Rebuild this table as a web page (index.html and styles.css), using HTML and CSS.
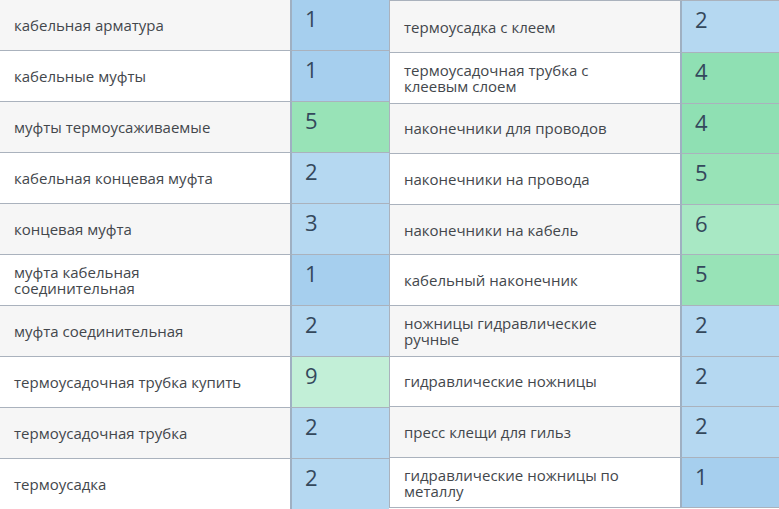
FILE: index.html
```html
<!DOCTYPE html>
<html lang="ru">
<head>
<meta charset="utf-8">
<link rel="stylesheet" href="styles.css">
</head>
<body>
<div class="wrap">
  <div class="tbl tbl-left">
    <div class="row"><div class="lbl">кабельная арматура</div><div class="num c1">1</div></div>
    <div class="row"><div class="lbl">кабельные муфты</div><div class="num c1">1</div></div>
    <div class="row"><div class="lbl">муфты термоусаживаемые</div><div class="num c5">5</div></div>
    <div class="row"><div class="lbl">кабельная концевая муфта</div><div class="num c2">2</div></div>
    <div class="row"><div class="lbl">концевая муфта</div><div class="num c2">3</div></div>
    <div class="row"><div class="lbl">муфта кабельная соединительная</div><div class="num c1">1</div></div>
    <div class="row"><div class="lbl">муфта соединительная</div><div class="num c2">2</div></div>
    <div class="row"><div class="lbl">термоусадочная трубка купить</div><div class="num c9">9</div></div>
    <div class="row"><div class="lbl">термоусадочная трубка</div><div class="num c2">2</div></div>
    <div class="row"><div class="lbl">термоусадка</div><div class="num c2">2</div></div>
  </div>
  <div class="tbl tbl-right">
    <div class="row"><div class="lbl">термоусадка с клеем</div><div class="num c2">2</div></div>
    <div class="row"><div class="lbl">термоусадочная трубка с клеевым слоем</div><div class="num c4">4</div></div>
    <div class="row"><div class="lbl">наконечники для проводов</div><div class="num c4">4</div></div>
    <div class="row"><div class="lbl">наконечники на провода</div><div class="num c5">5</div></div>
    <div class="row"><div class="lbl">наконечники на кабель</div><div class="num c6">6</div></div>
    <div class="row"><div class="lbl">кабельный наконечник</div><div class="num c5">5</div></div>
    <div class="row"><div class="lbl">ножницы гидравлические ручные</div><div class="num c2">2</div></div>
    <div class="row"><div class="lbl">гидравлические ножницы</div><div class="num c2">2</div></div>
    <div class="row"><div class="lbl">пресс клещи для гильз</div><div class="num c2">2</div></div>
    <div class="row"><div class="lbl">гидравлические ножницы по металлу</div><div class="num c1">1</div></div>
  </div>
</div>
</body>
</html>
```

FILE: styles.css
```css
* { box-sizing: border-box; }
html, body { margin: 0; padding: 0; background: #ffffff; }
body {
  width: 779px;
  height: 509px;
  overflow: hidden;
  font-family: "Open Sans", "Noto Sans", sans-serif;
  color: #43474c;
}
.wrap {
  display: flex;
  align-items: flex-start;
}
.tbl {
  display: flex;
  flex-direction: column;
}
.tbl-left { width: 389px; }
.tbl-right {
  width: 390px;
  border-top: 1px solid #aab2bd;
  border-left: 1px solid #aab2bd;
}
.row {
  display: grid;
  grid-template-columns: 290px 1fr;
  height: 51px;
  flex: none;
}
.tbl-right .row { height: 50.6px; }
.tbl-right .row:first-child { height: 52px; }
.row:nth-child(odd) .lbl { background: #f6f6f6; }
.row:nth-child(even) .lbl { background: #ffffff; }
.lbl {
  display: flex;
  align-items: center;
  padding: 0 38px 0 14px;
  font-size: 15px;
  line-height: 16px;
  border-bottom: 1px solid #aab2bd;
}
.num {
  border-left: 2px solid #9fb0c2;
  border-bottom: 1px solid #aab2bd;
  padding: 3px 0 0 13px;
  font-size: 22px;
  line-height: 30px;
  color: #34485c;
}
.c1 { background: #a6cfee; }
.c2 { background: #b5d8f1; }
.c4 { background: #8fe0b3; }
.c5 { background: #98e3b7; }
.c6 { background: #a8e8c4; }
.c9 { background: #c2efd7; }
```
